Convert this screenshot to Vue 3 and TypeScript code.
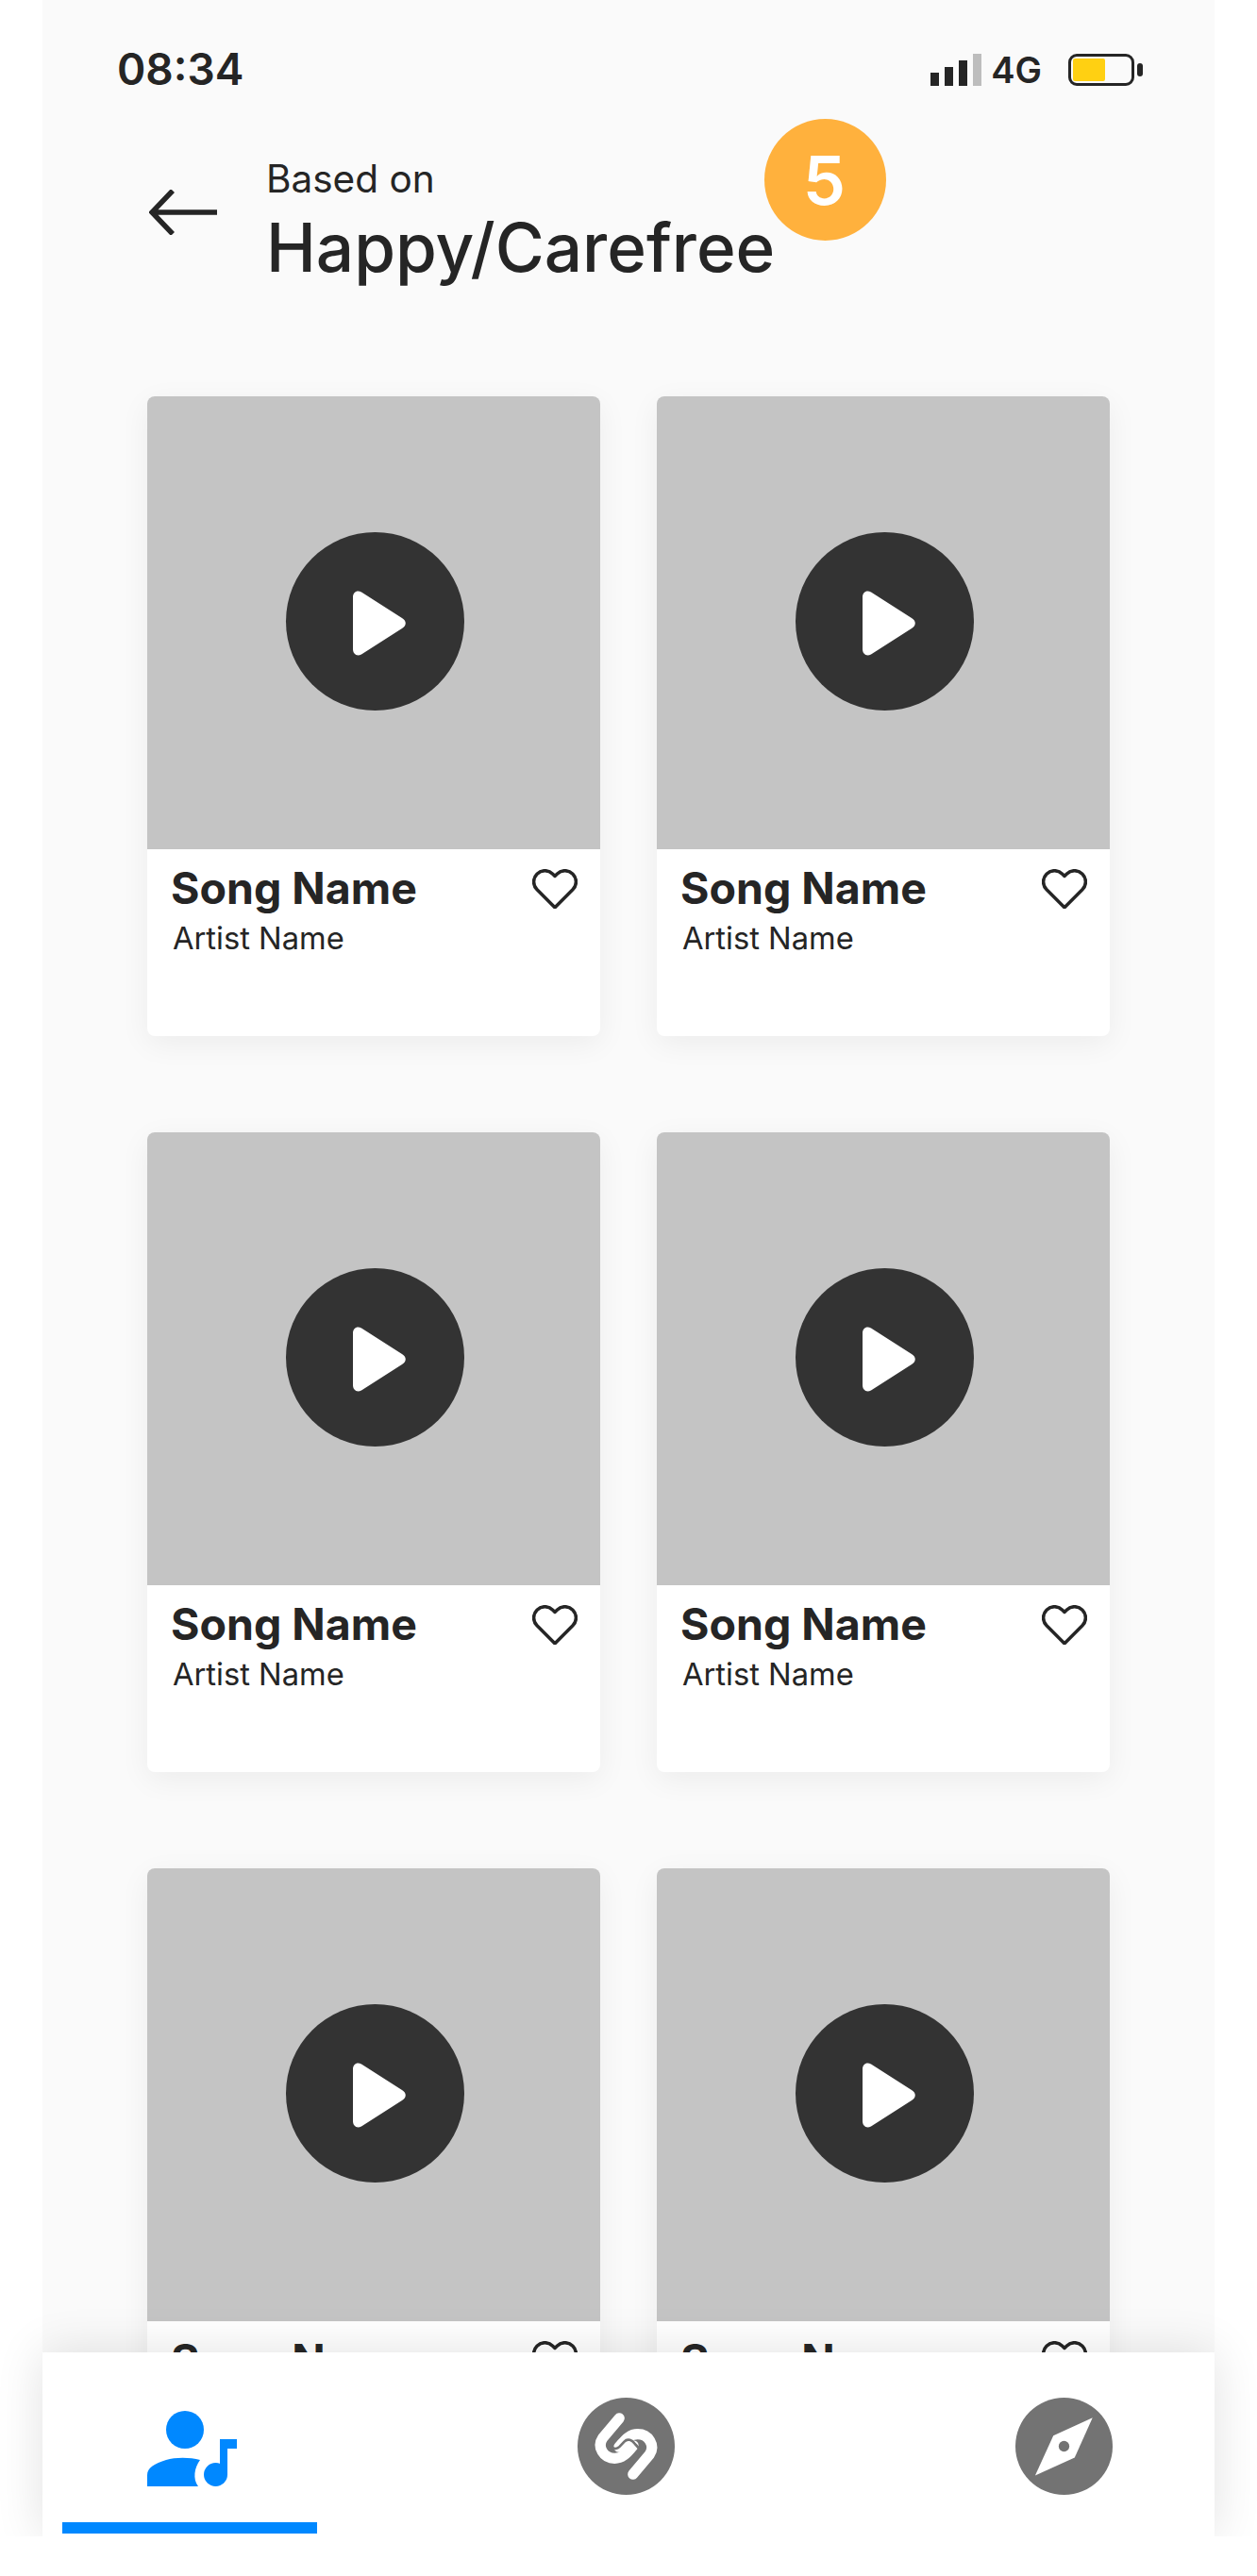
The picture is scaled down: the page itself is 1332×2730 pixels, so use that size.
<script setup lang="ts">
interface Song {
  id: number;
  name: string;
  artist: string;
}

const songs: Song[] = Array.from({ length: 6 }, (_, i) => ({
  id: i,
  name: 'Song Name',
  artist: 'Artist Name',
}));
</script>

<template>
  <div class="phone">
    <div class="screen">
      <div class="status">
        <span class="time">08:34</span>
        <div class="status-right">
          <div class="signal">
            <i class="b1"></i><i class="b2"></i><i class="b3"></i><i class="b4"></i>
          </div>
          <span class="net">4G</span>
          <div class="battery"><div class="level"></div></div>
          <div class="tip"></div>
        </div>
      </div>

      <header class="head">
        <svg class="back" width="72" height="48" viewBox="0 0 72 48" fill="none">
          <path d="M72 24H4M25 1 3 24l22 23" stroke="#252525" stroke-width="5.500" />
        </svg>
        <div class="titles">
          <div class="sub">Based on</div>
          <h1>Happy/Carefree</h1>
        </div>
        <div class="badge">5</div>
      </header>

      <div class="grid">
        <article v-for="song in songs" :key="song.id" class="card">
          <div class="cover">
            <div class="play">
              <svg width="56" height="69" viewBox="0 0 56 69">
                <path d="M0 7C0 2 4 -1 9 1.500L52 29C57 32 57 37 52 40L9 67.500C4 70 0 67 0 62Z" fill="#fff" />
              </svg>
            </div>
          </div>
          <div class="info">
            <div class="meta">
              <div class="song">{{ song.name }}</div>
              <div class="artist">{{ song.artist }}</div>
            </div>
            <svg class="heart" width="48" height="42" viewBox="0.8 2.2 22.4 19.6" fill="none">
              <path d="M20.840 4.610a5.500 5.500 0 0 0-7.780 0L12 5.670l-1.060-1.060a5.500 5.500 0 0 0-7.780 7.780l1.060 1.060L12 21.230l7.780-7.780 1.060-1.060a5.500 5.500 0 0 0 0-7.780z" stroke="#252525" stroke-width="1.650" stroke-linejoin="round" />
            </svg>
          </div>
        </article>
      </div>
    </div>

    <nav class="nav">
      <div class="tab active">
        <svg class="tab-icon" width="95" height="80" viewBox="0 0 95 80" fill="#0088ff">
          <circle cx="40" cy="20" r="20" />
          <path d="M0 80V68C0 60 8 56 20 52 30 49 45 49 56 52 50 60 48 72 54 80Z" />
          <path d="M77 30H95V40H85V68H77Z" />
          <circle cx="72.500" cy="67.500" r="12.500" />
        </svg>
        <div class="bar"></div>
      </div>
      <div class="tab shazam">
        <svg class="tab-icon" width="103" height="103" viewBox="31 31 312 312">
          <circle cx="187" cy="187" r="156" fill="#737373" />
          <g fill="none" stroke="#fff" stroke-width="34" stroke-linecap="round">
            <path d="M165 97 112 160C92 190 115 226 150 226 180 226 195 200 210 185" />
            <path d="M209 277 262 214C282 184 259 148 224 148 194 148 179 174 164 189" />
          </g>
          <path d="M166 142 142 168C128 186 150 204 166 188L181 172C192 160 207 168 214 178 222 188 238 198 226 212L206 236" fill="none" stroke="#737373" stroke-width="8" />
        </svg>
      </div>
      <div class="tab">
        <svg class="tab-icon" width="103" height="103" viewBox="29 34 310 310">
          <circle cx="184" cy="189" r="155" fill="#737373" />
          <path d="M275 98 150 155 92 282 218 225Z" fill="#fff" />
          <circle cx="184" cy="189" r="17" fill="#737373" />
        </svg>
      </div>
    </nav>
  </div>
</template>

<style>
body {
  background: #fff;
}
</style>

<style scoped>
.phone {
  width: 1242px;
  margin: 0 auto;
  font-family: Inter, "Liberation Sans", sans-serif;
  color: #252525;
}

.screen {
  height: 2493px;
  overflow: hidden;
  background: #fafafa;
  box-sizing: border-box;
}

.status {
  display: flex;
  justify-content: space-between;
  align-items: center;
  padding: 50px 76px 0 79px;
  height: 47px;
}

.time {
  font-size: 46px;
  font-weight: 600;
  line-height: 47px;
}

.status-right {
  display: flex;
  align-items: center;
}

.signal {
  display: flex;
  align-items: flex-end;
  gap: 6px;
  height: 34px;
}

.signal i {
  display: block;
  width: 9px;
  background: #252525;
}

.signal .b1 { height: 14px; }
.signal .b2 { height: 20px; }
.signal .b3 { height: 27px; }
.signal .b4 { height: 34px; background: #bdbdbd; }

.net {
  margin: 0 28px 0 10px;
  font-size: 38px;
  font-weight: 600;
  line-height: 34px;
}

.battery {
  box-sizing: border-box;
  width: 70px;
  height: 34px;
  padding: 2px;
  border: 3px solid #252525;
  border-radius: 9px;
}

.level {
  width: 34px;
  height: 100%;
  background: #ffd012;
  border-radius: 2px;
}

.tip {
  width: 6px;
  height: 14px;
  margin-left: 3px;
  background: #252525;
  border-radius: 3px;
}

.head {
  display: flex;
  align-items: flex-start;
  padding: 29px 0 0 113px;
}

.back {
  margin-top: 75px;
}

.titles {
  margin: 40px 0 0 52px;
  width: 540px;
}

.sub {
  font-size: 40.500px;
  line-height: 48px;
  margin-bottom: 5px;
}

h1 {
  margin: 0;
  font-size: 71px;
  font-weight: 500;
  line-height: 86px;
  white-space: nowrap;
}

.badge {
  width: 129px;
  height: 129px;
  margin-left: -12px;
  border-radius: 50%;
  background: #ffb13d;
  color: #fff;
  font-size: 72px;
  font-weight: 600;
  line-height: 129px;
  text-align: center;
  text-indent: -2px;
}

.grid {
  display: grid;
  grid-template-columns: 480px 480px;
  column-gap: 60px;
  row-gap: 102px;
  padding: 115px 0 0 111px;
}

.card {
  height: 678px;
  background: #fff;
  border-radius: 8px;
  overflow: hidden;
  box-shadow: 0 8px 32px rgba(0, 0, 0, 0.06);
}

.cover {
  display: flex;
  align-items: center;
  justify-content: center;
  height: 480px;
  background: #c4c4c4;
}

.play {
  display: flex;
  align-items: center;
  justify-content: center;
  width: 189px;
  height: 189px;
  margin: -3px 0 0 3px;
  padding: 3px 0 0 9px;
  box-sizing: border-box;
  border-radius: 50%;
  background: #333;
}

.info {
  display: flex;
  justify-content: space-between;
  padding: 13px 24px 0 25px;
}

.song {
  font-size: 46.500px;
  font-weight: 700;
  line-height: 56px;
}

.artist {
  margin: 4px 0 0 2px;
  font-size: 32.700px;
  line-height: 42px;
}

.heart {
  margin-top: 8px;
}

.nav {
  position: relative;
  display: flex;
  justify-content: space-between;
  height: 195px;
  padding: 0 25px 0 21px;
  box-sizing: border-box;
  background: #fff;
  box-shadow: 0 0 48px rgba(0, 0, 0, 0.12);
}

.tab {
  display: flex;
  flex-direction: column;
  align-items: center;
  width: 270px;
}

.tab-icon {
  margin-top: 48px;
}

.tab.shazam .tab-icon {
  margin-right: 2px;
}

.tab.active .tab-icon {
  margin: 62px 0 0 5px;
}

.bar {
  width: 270px;
  height: 12px;
  margin-top: 38px;
  background: #0088ff;
}
</style>
